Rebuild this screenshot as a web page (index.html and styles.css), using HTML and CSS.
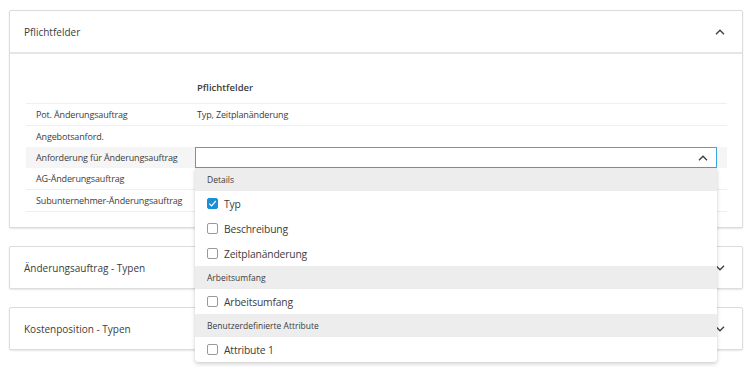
FILE: index.html
```html
<!DOCTYPE html>
<html lang="de">
<head>
<meta charset="utf-8">
<link rel="stylesheet" href="styles.css">
</head>
<body>
<div class="page">
  <section class="card">
    <div class="card-head">
      <span class="card-title">Pflichtfelder</span>
      <svg class="chev" width="10" height="6" viewBox="0 0 10 6"><path d="M1 5.2L5 1.2L9 5.2" fill="none" stroke="#3c3c3c" stroke-width="1.3"/></svg>
    </div>
    <div class="card-body">
      <div class="tbl">
        <div class="row row-head"><div class="c1"></div><div class="c2 th">Pflichtfelder</div></div>
        <div class="row"><div class="c1">Pot. Änderungsauftrag</div><div class="c2 val">Typ, Zeitplanänderung</div></div>
        <div class="row"><div class="c1">Angebotsanford.</div><div class="c2"></div></div>
        <div class="row row-active"><div class="c1">Anforderung für Änderungsauftrag</div>
          <div class="c2">
            <div class="select">
              <div class="select-box">
                <svg class="chev" width="10" height="6" viewBox="0 0 10 6"><path d="M1 5.2L5 1.2L9 5.2" fill="none" stroke="#3c3c3c" stroke-width="1.3"/></svg>
              </div>
              <div class="menu">
                <div class="grp">Details</div>
                <div class="opt"><span class="cb on"><svg width="11" height="11" viewBox="0 0 11 11"><path d="M2.3 5.6L4.6 7.9L8.8 3" fill="none" stroke="#fff" stroke-width="1.2"/></svg></span>Typ</div>
                <div class="opt"><span class="cb"></span>Beschreibung</div>
                <div class="opt"><span class="cb"></span>Zeitplanänderung</div>
                <div class="grp">Arbeitsumfang</div>
                <div class="opt"><span class="cb"></span>Arbeitsumfang</div>
                <div class="grp">Benutzerdefinierte Attribute</div>
                <div class="opt"><span class="cb"></span>Attribute 1</div>
              </div>
            </div>
          </div>
        </div>
        <div class="row"><div class="c1">AG-Änderungsauftrag</div><div class="c2"></div></div>
        <div class="row"><div class="c1">Subunternehmer-Änderungsauftrag</div><div class="c2"></div></div>
      </div>
    </div>
  </section>
  <section class="card">
    <div class="card-head closed">
      <span class="card-title">Änderungsauftrag - Typen</span>
      <svg class="chev" width="10" height="6" viewBox="0 0 10 6"><path d="M1 0.8L5 4.8L9 0.8" fill="none" stroke="#3c3c3c" stroke-width="1.3"/></svg>
    </div>
  </section>
  <section class="card">
    <div class="card-head closed">
      <span class="card-title">Kostenposition - Typen</span>
      <svg class="chev" width="10" height="6" viewBox="0 0 10 6"><path d="M1 0.8L5 4.8L9 0.8" fill="none" stroke="#3c3c3c" stroke-width="1.3"/></svg>
    </div>
  </section>
</div>
</body>
</html>
```
FILE: styles.css
```css
html, body { margin: 0; padding: 0; background: #fff; }
body {
  font-family: "Open Sans", "Noto Sans", sans-serif;
  color: #3c3c3c;
  min-height: 367px;
}
.page {
  padding: 10px 8px 20px 9px;
  display: flex;
  flex-direction: column;
  gap: 18px;
}
.card {
  border: 1px solid #dcdcdc;
  border-radius: 2px;
  box-shadow: 0 1px 2px rgba(0,0,0,0.10);
  background: #fff;
}
.card-head {
  height: 41px;
  display: flex;
  align-items: center;
  justify-content: space-between;
  padding: 0 17px 0 14px;
  border-bottom: 2px solid #e6e6e6;
}
.card-head.closed { border-bottom: none; height: 41px; }
.card-title { font-size: 10px; }
.card-body { padding: 18px 15px 15px 16px; }
.tbl { display: flex; flex-direction: column; }
.row {
  display: flex;
  height: 21px;
  align-items: center;
  border-bottom: 1px solid #efefef;
  font-size: 9px;
  letter-spacing: -0.15px;
}
.row:nth-child(3) { border-bottom: none; }
.row-active { background: #f5f5f5; border-bottom: none; }
.row-head { height: 31px; align-items: flex-end; }
.c1 { width: 159px; padding-left: 10px; flex: none; }
.c2 { flex: 1; padding: 0 10px 0 0; align-self: stretch; display: flex; align-items: center; }
.th { font-weight: 600; font-size: 9.5px; letter-spacing: 0; align-items: flex-end; padding-left: 2px; padding-bottom: 9px; }
.val { padding-left: 2px; }
.select { position: relative; flex: 1; height: 100%; }
.select-box {
  box-sizing: border-box;
  height: 21px;
  border: 1px solid #3ca8e0;
  background: #fff;
  display: flex;
  align-items: center;
  justify-content: flex-end;
  padding-right: 8px;
}
.menu {
  position: absolute;
  left: 0; right: 0;
  top: 21px;
  background: #fff;
  border-radius: 0 0 3px 3px;
  box-shadow: 0 2px 4px rgba(0,0,0,0.18), 0 0 1px rgba(0,0,0,0.15);
  z-index: 5;
  letter-spacing: 0;
}
.grp {
  height: 23px;
  display: flex;
  align-items: center;
  padding-left: 12px;
  background: #ededed;
  font-size: 8.5px;
}
.opt {
  height: 25px;
  display: flex;
  align-items: center;
  padding-left: 12px;
  font-size: 10.3px;
  letter-spacing: -0.15px;
  gap: 6px;
}
.cb {
  box-sizing: border-box;
  width: 11px; height: 11px;
  border: 1px solid #9a9a9a;
  border-radius: 2px;
  display: inline-flex;
  background: #fff;
}
.cb.on { background: #1a8fd6; border-color: #1a8fd6; }
.cb.on svg { margin: -1px; }
```
